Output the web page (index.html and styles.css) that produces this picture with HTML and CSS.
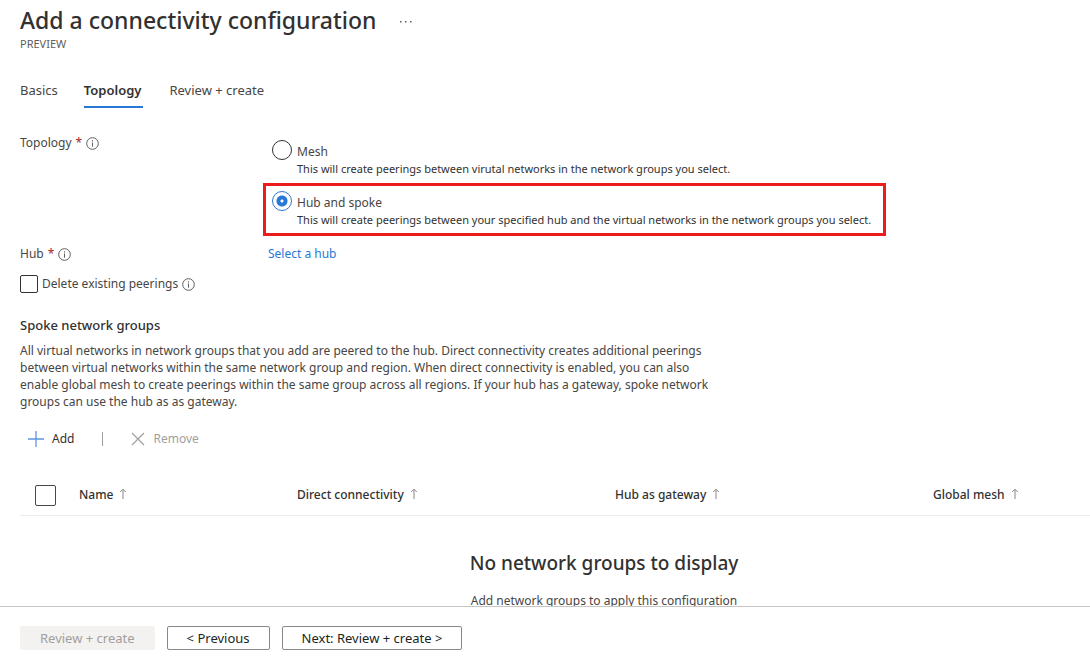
FILE: index.html
```html
<!DOCTYPE html>
<html lang="en">
<head>
<meta charset="utf-8">
<title>Add a connectivity configuration</title>
<meta name="viewport" content="width=device-width, initial-scale=1">
<link rel="stylesheet" href="styles.css">
</head>
<body>
<svg class="sprite" aria-hidden="true">
  <symbol id="info" viewBox="0 0 13 13">
    <circle cx="6.5" cy="6.5" r="5.8" fill="none" stroke="currentColor"/>
    <path d="M6.5 5.5v4.2M6.5 3.2v1.3" fill="none" stroke="currentColor"/>
  </symbol>
  <symbol id="sort" viewBox="0 0 8 12">
    <path d="M4 11V1.5M1.2 4L4 1.2L6.8 4" fill="none" stroke="currentColor"/>
  </symbol>
</svg>
<main class="page">
  <header class="heading">
    <div class="heading-row">
      <h1 class="title">Add a connectivity configuration</h1>
      <button class="more" type="button" aria-label="More actions">
        <svg width="12" height="2" viewBox="0 0 12 2" fill="#605e5c"><path d="M0 0h1.5v1.5H0zM5 0h1.5v1.5H5zM10 0h1.5v1.5h-1.5z"/></svg>
      </button>
    </div>
    <p class="preview">PREVIEW</p>
  </header>

  <nav class="tabs" aria-label="Steps">
    <a class="tab" href="#basics">Basics</a>
    <a class="tab tab-active" href="#topology" aria-current="page">Topology</a>
    <a class="tab" href="#review">Review + create</a>
  </nav>

  <section class="form">
    <div class="form-row">
      <div class="label" id="topology-label">Topology <span class="required">*</span><svg class="info"><use href="#info"/></svg></div>
      <div class="options" role="radiogroup" aria-labelledby="topology-label">
        <label class="option" for="mesh">
          <input class="radio" type="radio" name="topology" id="mesh">
          <span class="option-text">
            <span class="option-name">Mesh</span>
            <span class="option-note">This will create peerings between virutal networks in the network groups you select.</span>
          </span>
        </label>
        <label class="option option-marked" for="hub-spoke">
          <input class="radio" type="radio" name="topology" id="hub-spoke" checked>
          <span class="option-text">
            <span class="option-name">Hub and spoke</span>
            <span class="option-note">This will create peerings between your specified hub and the virtual networks in the network groups you select.</span>
          </span>
        </label>
      </div>
    </div>
    <div class="form-row hub-row">
      <div class="label">Hub <span class="required">*</span><svg class="info"><use href="#info"/></svg></div>
      <a class="link" href="#select-hub">Select a hub</a>
    </div>
    <div class="check-row">
      <input class="check check-small" type="checkbox" id="delete-peerings">
      <label for="delete-peerings">Delete existing peerings</label>
      <svg class="info"><use href="#info"/></svg>
    </div>
  </section>

  <section class="groups">
    <h2 class="subtitle">Spoke network groups</h2>
    <p class="intro">All virtual networks in network groups that you add are peered to the hub. Direct connectivity creates additional peerings between virtual networks within the same network group and region. When direct connectivity is enabled, you can also enable global mesh to create peerings within the same group across all regions. If your hub has a gateway, spoke network groups can use the hub as as gateway.</p>
    <div class="toolbar">
      <button class="tool" type="button">
        <svg width="16" height="16" viewBox="0 0 16 16"><path d="M8 0v16M0 8h16" stroke="#5f95e0" stroke-width="1.3" fill="none"/></svg>Add
      </button>
      <span class="divider"></span>
      <button class="tool" type="button" disabled>
        <svg width="14" height="14" viewBox="0 0 14 14"><path d="M1 1l12 12M13 1L1 13" stroke="#a19f9d" stroke-width="1.2" fill="none"/></svg>Remove
      </button>
    </div>
    <table class="table">
      <thead>
        <tr>
          <th class="col-check"><input class="check" type="checkbox" aria-label="Select all"></th>
          <th class="col-name">Name<svg class="sort"><use href="#sort"/></svg></th>
          <th class="col-wide">Direct connectivity<svg class="sort"><use href="#sort"/></svg></th>
          <th class="col-wide">Hub as gateway<svg class="sort"><use href="#sort"/></svg></th>
          <th>Global mesh<svg class="sort"><use href="#sort"/></svg></th>
        </tr>
      </thead>
    </table>
    <div class="empty">
      <h3 class="empty-title">No network groups to display</h3>
      <p class="empty-note">Add network groups to apply this configuration</p>
    </div>
  </section>
</main>
<footer class="footer">
  <button class="button" type="button" disabled>Review + create</button>
  <button class="button" type="button">&lt; Previous</button>
  <button class="button" type="button">Next: Review + create &gt;</button>
</footer>
</body>
</html>
```

FILE: styles.css
```css
* {
  box-sizing: border-box;
}

body {
  display: flex;
  flex-direction: column;
  height: 100vh;
  margin: 0;
  background: #fff;
  color: #484644;
  font: 12px/16px "Segoe UI", "Noto Sans", "Open Sans", sans-serif;
}

h1, h2, h3, p {
  margin: 0;
}

button, input {
  font: inherit;
}

.sprite {
  display: none;
}

.page {
  flex: 1;
  min-height: 0;
  overflow: hidden;
  padding: 4px 0 0 20px;
}

.heading-row {
  display: flex;
  align-items: center;
  gap: 24px;
}

.title {
  color: #323130;
  font-size: 23px;
  font-weight: 500;
  line-height: 32px;
}

.more {
  display: flex;
  padding: 4px 0 0;
  border: 0;
  background: none;
}

.preview {
  color: #605e5c;
  font-size: 11px;
  line-height: 16px;
}

.tabs {
  display: flex;
  gap: 26px;
  margin-top: 28px;
  font-size: 13px;
}

.tab {
  padding: 1px 0 7px;
  border-bottom: 2px solid transparent;
  line-height: 18px;
  color: #484644;
  text-decoration: none;
}

.tab-active {
  padding-right: 2px;
  border-color: #2878d6;
  color: #323130;
  font-weight: 600;
}

.form-row {
  display: grid;
  grid-template-columns: 243px 1fr;
}

.form {
  margin-top: 26px;
}

.label,
.check-row {
  display: flex;
  align-items: center;
  gap: 4px;
  align-self: start;
  line-height: 18px;
}

.required {
  color: #a4262c;
}

.info {
  width: 13px;
  height: 13px;
  color: #605e5c;
}

.options {
  display: flex;
  flex-direction: column;
  align-items: flex-start;
}

.option {
  display: flex;
  gap: 5px;
  padding: 3px 12px 3px 6px;
  border: 3px solid transparent;
}

.option-marked {
  border-color: #ec1c1c;
  padding-top: 5px;
  padding-bottom: 5px;
}

.option-text {
  display: flex;
  flex-direction: column;
  padding-top: 3px;
}

.option-name {
  line-height: 18px;
}

.option-note {
  color: #323130;
  font-size: 11px;
  line-height: 16px;
}

.radio {
  flex: none;
  width: 20px;
  height: 20px;
  margin: 0;
  appearance: none;
  border: 1px solid #323130;
  border-radius: 50%;
  background: #fff;
}

.radio:checked {
  border-color: #2878d6;
  background: radial-gradient(circle, #fff 1px, #2878d6 2px, #2878d6 5px, #fff 6px);
}

.hub-row {
  margin-top: 9px;
}

.link {
  justify-self: start;
  padding-left: 5px;
  color: #2878d6;
  line-height: 18px;
  text-decoration: none;
}

.check-row {
  margin-top: 12px;
}

.check {
  display: block;
  width: 21px;
  height: 21px;
  margin: 0;
  appearance: none;
  border: 1px solid #484644;
  border-radius: 2px;
  background: #fff;
}

.check-small {
  width: 18px;
  height: 18px;
  border-color: #323130;
}

.groups {
  margin-top: 22px;
}

.subtitle {
  color: #323130;
  font-size: 13px;
  font-weight: 500;
  line-height: 20px;
}

.intro {
  max-width: 700px;
  margin-top: 7px;
  line-height: 17px;
}

.toolbar {
  display: flex;
  align-items: center;
  gap: 28px;
  padding: 19px 8px 0;
}

.tool {
  display: flex;
  align-items: center;
  gap: 8px;
  padding: 0;
  border: 0;
  background: none;
  color: #323130;
  line-height: 20px;
}

.tool:disabled {
  color: #a19f9d;
}

.divider {
  width: 1px;
  height: 14px;
  background: #a19f9d;
}

.table {
  width: 100%;
  margin-top: 25px;
  border-collapse: collapse;
  table-layout: fixed;
}

.table th {
  height: 41px;
  padding: 2px 0 0;
  border-bottom: 1px solid #edebe9;
  color: #323130;
  font-weight: 500;
  text-align: left;
}

.col-check {
  width: 59px;
}

.table .col-check {
  padding-left: 15px;
}

.col-name {
  width: 218px;
}

.col-wide {
  width: 318px;
}

.sort {
  width: 8px;
  height: 12px;
  margin-left: 6px;
  color: #8a8886;
  vertical-align: -1px;
}

.empty {
  padding: 31px 0 0 98px;
  text-align: center;
}

.empty-title {
  color: #323130;
  font-size: 19px;
  font-weight: 500;
  line-height: 32px;
}

.empty-note {
  margin-top: 13px;
  line-height: 18px;
}

.footer {
  display: flex;
  gap: 12px;
  padding: 19px 20px 8px;
  border-top: 1px solid #c8c6c4;
  background: #fff;
}

.button {
  height: 24px;
  padding: 0 19px;
  border: 1px solid #8a8886;
  border-radius: 2px;
  background: #fff;
  color: #201f1e;
  font-size: 13px;
  line-height: 20px;
}

.button:disabled {
  border-color: #f3f2f1;
  background: #f3f2f1;
  color: #a19f9d;
}
```
